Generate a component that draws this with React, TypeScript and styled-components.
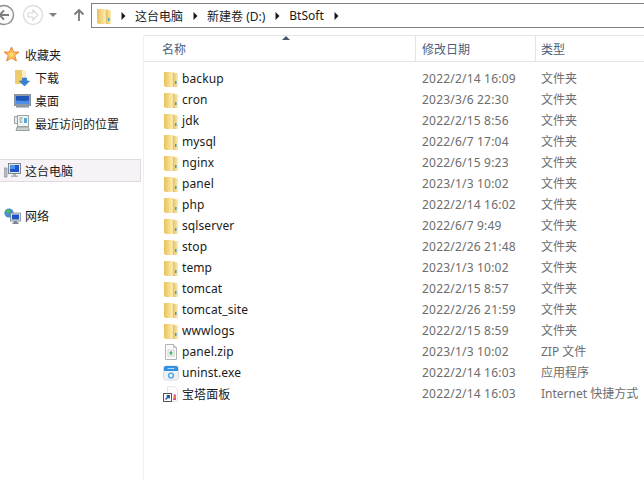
import styled, { createGlobalStyle } from "styled-components";

const GlobalStyle = createGlobalStyle`
  html, body {
    margin: 0;
    padding: 0;
    background: #ffffff;
    overflow: hidden;
  }
  * {
    box-sizing: border-box;
  }
`;

const files = [
  { name: "backup", date: "2022/2/14 16:09", type: "文件夹", icon: "folder" },
  { name: "cron", date: "2023/3/6 22:30", type: "文件夹", icon: "folder" },
  { name: "jdk", date: "2022/2/15 8:56", type: "文件夹", icon: "folder" },
  { name: "mysql", date: "2022/6/7 17:04", type: "文件夹", icon: "folder" },
  { name: "nginx", date: "2022/6/15 9:23", type: "文件夹", icon: "folder" },
  { name: "panel", date: "2023/1/3 10:02", type: "文件夹", icon: "folder" },
  { name: "php", date: "2022/2/14 16:02", type: "文件夹", icon: "folder" },
  { name: "sqlserver", date: "2022/6/7 9:49", type: "文件夹", icon: "folder" },
  { name: "stop", date: "2022/2/26 21:48", type: "文件夹", icon: "folder" },
  { name: "temp", date: "2023/1/3 10:02", type: "文件夹", icon: "folder" },
  { name: "tomcat", date: "2022/2/15 8:57", type: "文件夹", icon: "folder" },
  { name: "tomcat_site", date: "2022/2/26 21:59", type: "文件夹", icon: "folder" },
  { name: "wwwlogs", date: "2022/2/15 8:59", type: "文件夹", icon: "folder" },
  { name: "panel.zip", date: "2023/1/3 10:02", type: "ZIP 文件", icon: "zip" },
  { name: "uninst.exe", date: "2022/2/14 16:03", type: "应用程序", icon: "exe" },
  { name: "宝塔面板", date: "2022/2/14 16:03", type: "Internet 快捷方式", icon: "link" },
];

const FolderIcon = () => (
  <svg width="16" height="16" viewBox="0 0 16 16">
    <defs>
      <linearGradient id="leaf" x1="0" y1="0" x2="1" y2="0">
        <stop offset="0" stopColor="#e9c15c" />
        <stop offset="0.6" stopColor="#f6dc8b" />
        <stop offset="1" stopColor="#fdf1c0" />
      </linearGradient>
      <linearGradient id="back" x1="0" y1="0" x2="1" y2="0">
        <stop offset="0" stopColor="#e3bb55" />
        <stop offset="1" stopColor="#fbeeb8" />
      </linearGradient>
    </defs>
    <path d="M1 1h8.5L15 2v14H2.5L1 14.5z" fill="#fbefc4" />
    <path d="M9.5 1.5L15 3v13H9.5z" fill="url(#back)" />
    <path d="M1 1h8.5v12.5L10 16H2.5L1 14.5z" fill="url(#leaf)" />
    <rect x="12" y="10" width="1.5" height="3" fill="#3f9fdc" />
  </svg>
);

const ZipIcon = () => (
  <svg width="16" height="16" viewBox="0 0 16 16">
    <path d="M2.5 0.5h8l3 3v12h-11z" fill="#fbfbfb" stroke="#b4b4b4" />
    <path d="M10.5 0.5v3h3" fill="#e4e4e4" stroke="#b4b4b4" />
    <rect x="5" y="6" width="6" height="6" fill="#ffffff" stroke="#cfcfcf" />
    <path d="M8 7v4M6.2 9h3.6" stroke="#28a745" strokeWidth="1.2" />
  </svg>
);

const ExeIcon = () => (
  <svg width="16" height="16" viewBox="0 0 16 16">
    <rect x="0.5" y="1" width="15" height="14" rx="2" fill="#eef2f7" stroke="#d6dce4" />
    <path d="M1 3a2 2 0 0 1 2-2h10a2 2 0 0 1 2 2v3H1z" fill="#2f8fe0" />
    <path d="M4.5 3.5h7" stroke="#a9d4f5" strokeWidth="1.2" />
    <circle cx="8" cy="10.5" r="2.4" fill="none" stroke="#4aa3e6" strokeWidth="1.4" />
  </svg>
);

const LinkIcon = () => (
  <svg width="16" height="16" viewBox="0 0 16 16">
    <path d="M4.5 0.5h7l3 3v12h-10z" fill="#fcfcfc" stroke="#e6e6e6" />
    <path d="M11 8l2 1v5h-3z" fill="#e23fa0" />
    <path d="M11.5 9l1.5 2-2 2z" fill="#f2a33a" />
    <rect x="0.5" y="7.5" width="8" height="8" fill="#ffffff" stroke="#555555" />
    <path d="M2.5 13.5l3-3M3.6 9.8h2.6v2.6" fill="none" stroke="#1c4f9c" strokeWidth="1.4" />
  </svg>
);

const fileIcons: Record<string, JSX.Element> = {
  folder: <FolderIcon />,
  zip: <ZipIcon />,
  exe: <ExeIcon />,
  link: <LinkIcon />,
};

const StarIcon = () => (
  <svg width="17" height="17" viewBox="0 0 17 17">
    <defs>
      <radialGradient id="star" cx="0.5" cy="0.55" r="0.5">
        <stop offset="0" stopColor="#ffe27a" />
        <stop offset="1" stopColor="#f79a3a" />
      </radialGradient>
    </defs>
    <path
      d="M8.5 1l2.2 5h5.3l-4.2 3.5 1.6 5.5-4.9-3.1-4.9 3.1 1.6-5.5L1 6h5.3z"
      fill="url(#star)"
      stroke="#e8843a"
      strokeWidth="0.9"
    />
  </svg>
);

const DownloadIcon = () => (
  <svg width="17" height="18" viewBox="0 0 17 18">
    <path d="M1 1h8l3 1v13H2l-1-1z" fill="#fbefc4" />
    <path d="M1 1h7v14H2l-1-1z" fill="#eecb6c" />
    <path d="M8.5 9h4v3h3l-5 5-5-5h3z" fill="#2f86d6" stroke="#1c66b4" strokeWidth="0.6" />
  </svg>
);

const DesktopIcon = () => (
  <svg width="17" height="14" viewBox="0 0 17 14">
    <rect x="0.5" y="0.5" width="16" height="11" fill="#8f9aa6" stroke="#8a95a1" />
    <rect x="2" y="2" width="13" height="8" fill="#1f55b8" />
    <path d="M2 6.5c4 0 8 1 13 0V10H2z" fill="#4d8fe6" />
    <rect x="2" y="12" width="13" height="1.6" fill="#8d99a6" />
  </svg>
);

const RecentIcon = () => (
  <svg width="17" height="17" viewBox="0 0 17 17">
    <path d="M0.5 1.5h4v7h-4z" fill="#e8e8e8" stroke="#98a4a4" />
    <rect x="3.5" y="0.5" width="11" height="11" fill="#f2f4f4" stroke="#98a4a4" />
    <path d="M5.5 3h3M5.5 5h2M5.5 7h3" stroke="#6d8d9c" />
    <rect x="10" y="3" width="3" height="5" fill="#5aa4d8" />
    <path d="M3 12h11l1.5 3.5H2z" fill="#c9d0d0" stroke="#98a4a4" />
  </svg>
);

const ComputerIcon = () => (
  <svg width="17" height="15" viewBox="0 0 17 15">
    <rect x="0" y="5" width="3" height="9" fill="#b9bfc6" stroke="#7b838c" strokeWidth="0.6" />
    <rect x="4.5" y="0.5" width="12" height="10" fill="#dfe4ea" stroke="#7f8891" />
    <rect x="6" y="2" width="9" height="7" fill="#1e56c8" />
    <path d="M6 2h5v4H6z" fill="#4b90ea" />
    <path d="M9 11h3v1.5h2V14H7v-1.5h2z" fill="#aab2ba" />
  </svg>
);

const NetworkIcon = () => (
  <svg width="17" height="16" viewBox="0 0 17 16">
    <circle cx="5" cy="5" r="4.6" fill="#3d8fd8" />
    <path d="M2 3c1-2 3-2 4-1s0 2-1 3-2 1-3-2zM6 6l2 1-1 2z" fill="#56b84a" />
    <rect x="6.5" y="5" width="10" height="8" fill="#dfe4ea" stroke="#6a7683" strokeWidth="0.7" />
    <rect x="8" y="6.5" width="7" height="5" fill="#1e56c8" />
    <path d="M10 13h3v1.2h1.5V16h-6v-1.8H10z" fill="#7d8790" />
  </svg>
);

const BackIcon = () => (
  <svg width="24" height="24" viewBox="0 0 24 24">
    <circle cx="12" cy="12" r="9.5" fill="#fbfbfb" stroke="#8e8e8e" strokeWidth="1.4" />
    <path d="M17 12H8M12 7.5L7.5 12l4.5 4.5" fill="none" stroke="#7c7c7c" strokeWidth="1.8" />
  </svg>
);

const ForwardIcon = () => (
  <svg width="24" height="24" viewBox="0 0 24 24">
    <circle cx="12" cy="12" r="9.5" fill="#ffffff" stroke="#dcdcdc" strokeWidth="1.4" />
    <path d="M7 10h5V7l5 5-5 5v-3H7z" fill="none" stroke="#d8d8d8" strokeWidth="1.2" />
  </svg>
);

const UpIcon = () => (
  <svg width="12" height="14" viewBox="0 0 12 14">
    <path d="M6 13V2M1.5 6.5L6 2l4.5 4.5" fill="none" stroke="#7a7a7a" strokeWidth="1.8" />
  </svg>
);

const Crumb = () => (
  <svg width="5" height="8" viewBox="0 0 5 8">
    <path d="M0.5 0l4 4-4 4z" fill="#1a1a1a" />
  </svg>
);

const App = () => (
  <Window>
    <GlobalStyle />
    <Toolbar>
      <NavGroup>
        <BackSlot>
          <BackIcon />
        </BackSlot>
        <ForwardSlot>
          <ForwardIcon />
        </ForwardSlot>
        <DropCaret />
        <UpSlot>
          <UpIcon />
        </UpSlot>
      </NavGroup>
      <AddressBar>
        <FolderIcon />
        <CrumbRow>
          <Crumb />
          <CrumbLabel>这台电脑</CrumbLabel>
          <Crumb />
          <CrumbLabel>新建卷 (D:)</CrumbLabel>
          <Crumb />
          <CrumbLabel>BtSoft</CrumbLabel>
          <Crumb />
        </CrumbRow>
      </AddressBar>
    </Toolbar>
    <Body>
      <Sidebar>
        <SideHead>
          <StarIcon />
          <SideLabel>收藏夹</SideLabel>
        </SideHead>
        <SideItem>
          <DownloadIcon />
          <SideLabel>下载</SideLabel>
        </SideItem>
        <SideItem>
          <DesktopIcon />
          <SideLabel>桌面</SideLabel>
        </SideItem>
        <SideItem>
          <RecentIcon />
          <SideLabel>最近访问的位置</SideLabel>
        </SideItem>
        <SelectedRow>
          <ComputerIcon />
          <SideLabel>这台电脑</SideLabel>
        </SelectedRow>
        <NetworkRow>
          <NetworkIcon />
          <SideLabel>网络</SideLabel>
        </NetworkRow>
      </Sidebar>
      <Main>
        <SortArrow />
        <Header>
          <NameHead>名称</NameHead>
          <DateHead>修改日期</DateHead>
          <TypeHead>类型</TypeHead>
        </Header>
        <FileList>
          {files.map((file) => (
            <FileRow key={file.name}>
              <NameCell>
                {fileIcons[file.icon]}
                <FileName>{file.name}</FileName>
              </NameCell>
              <DateCell>{file.date}</DateCell>
              <TypeCell>{file.type}</TypeCell>
            </FileRow>
          ))}
        </FileList>
      </Main>
    </Body>
  </Window>
);

export default App;

const fontStack = `"Noto Sans", "Noto Sans CJK SC", sans-serif`;

const Window = styled.div`
  width: 644px;
  height: 479px;
  overflow: hidden;
  background: #ffffff;
  font-family: ${fontStack};
  font-size: 12px;
  color: #1a1a1a;
`;

const Toolbar = styled.div`
  height: 35px;
  display: flex;
  align-items: flex-start;
  padding-top: 3px;
`;

const NavGroup = styled.div`
  width: 91px;
  height: 24px;
  display: flex;
  align-items: center;
  flex-shrink: 0;
`;

const BackSlot = styled.div`
  width: 24px;
  margin-left: -8px;
  display: flex;
`;

const ForwardSlot = styled.div`
  width: 24px;
  margin-left: 5px;
  display: flex;
`;

const DropCaret = styled.div`
  width: 0;
  height: 0;
  margin-left: 4px;
  border-left: 4px solid transparent;
  border-right: 4px solid transparent;
  border-top: 4px solid #7f7f7f;
`;

const UpSlot = styled.div`
  margin-left: 16px;
  display: flex;
`;

const AddressBar = styled.div`
  flex: 1;
  height: 25px;
  display: flex;
  align-items: center;
  padding-left: 4px;
  border: 1px solid #808080;
  border-right: none;
`;

const CrumbRow = styled.div`
  display: flex;
  align-items: center;
  gap: 9px;
  margin-left: 9px;
`;

const CrumbLabel = styled.span`
  font-size: 12px;
  color: #1a1a1a;
  margin-right: 1px;
`;

const Body = styled.div`
  display: flex;
  height: 444px;
`;

const Sidebar = styled.nav`
  width: 143px;
  flex-shrink: 0;
  padding-top: 8px;
`;

const SideRow = styled.div`
  height: 23px;
  display: flex;
  align-items: center;
`;

const SideHead = styled(SideRow)`
  padding-left: 3px;
  gap: 5px;
`;

const SideItem = styled(SideRow)`
  padding-left: 14px;
  gap: 4px;
`;

const SelectedRow = styled(SideRow)`
  width: 141px;
  margin-top: 24px;
  padding-left: 4px;
  gap: 4px;
  background: #f6f2f6;
  border: 1px solid #dfdbdf;
  border-left: none;
`;

const NetworkRow = styled(SideRow)`
  margin-top: 22px;
  padding-left: 4px;
  gap: 4px;
`;

const SideLabel = styled.span`
  font-size: 12px;
  color: #1a1a1a;
`;

const Main = styled.main`
  position: relative;
  flex: 1;
  border-left: 1px solid #f0f0f0;
`;

const SortArrow = styled.div`
  position: absolute;
  left: 138px;
  top: 1px;
  width: 0;
  height: 0;
  border-left: 4px solid transparent;
  border-right: 4px solid transparent;
  border-bottom: 4px solid #47576d;
`;

const Header = styled.div`
  height: 27px;
  display: grid;
  grid-template-columns: 271px 120px 1fr;
  border-top: 1px solid #e5e5e5;
  border-bottom: 1px solid #e5e5e5;
`;

const HeadCell = styled.div`
  display: flex;
  align-items: center;
  color: #4c607a;
  font-size: 12px;
`;

const NameHead = styled(HeadCell)`
  padding-left: 18px;
`;

const DateHead = styled(HeadCell)`
  padding-left: 6px;
  border-left: 1px solid #e5e5e5;
`;

const TypeHead = styled(HeadCell)`
  padding-left: 5px;
  border-left: 1px solid #e5e5e5;
`;

const FileList = styled.div`
  padding-top: 6px;
`;

const FileRow = styled.div`
  height: 21px;
  display: grid;
  grid-template-columns: 271px 120px 1fr;
  align-items: center;
  white-space: nowrap;
`;

const NameCell = styled.div`
  display: flex;
  align-items: center;
  gap: 3px;
  padding-left: 19px;
`;

const FileName = styled.span`
  font-size: 12px;
  letter-spacing: 0.1px;
  color: #1a1a1a;
`;

const DateCell = styled.div`
  padding-left: 7px;
  font-size: 12px;
  letter-spacing: 0.2px;
  color: #6d6d6d;
`;

const TypeCell = styled.div`
  padding: 0 0 2px 6px;
  font-size: 12px;
  color: #6d6d6d;
`;
